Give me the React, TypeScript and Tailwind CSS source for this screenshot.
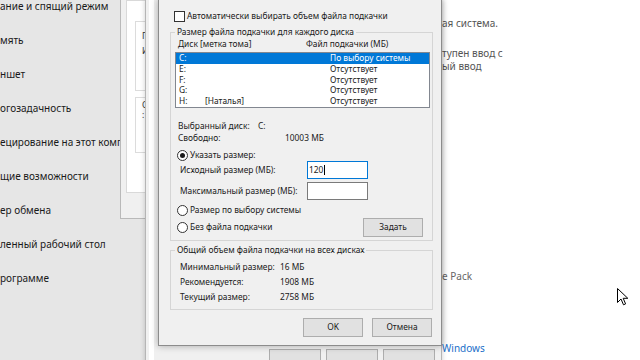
import React from "react"

const sidebarItems = [
  "ание и спящий режим",
  "мять",
  "ншет",
  "огозадачность",
  "ецирование на этот компьютер",
  "щие возможности",
  "ер обмена",
  "ленный рабочий стол",
  "рограмме",
]

const drives = [
  { letter: "C:", label: "", size: "По выбору системы", selected: true },
  { letter: "E:", label: "", size: "Отсутствует" },
  { letter: "F:", label: "", size: "Отсутствует" },
  { letter: "G:", label: "", size: "Отсутствует" },
  { letter: "H:", label: "[Наталья]", size: "Отсутствует" },
]

const totals = [
  { label: "Минимальный размер:", value: "16 МБ" },
  { label: "Рекомендуется:", value: "1908 МБ" },
  { label: "Текущий размер:", value: "2758 МБ" },
]

const Radio = ({ checked = false }: { checked?: boolean }) => (
  <span className="mr-[2px] flex h-[11px] w-[11px] shrink-0 items-center justify-center rounded-full border border-[#333] bg-white">
    {checked && <span className="h-[5px] w-[5px] rounded-full bg-[#1a1a1a]" />}
  </span>
)

const Button = ({ children, className = "" }: { children?: React.ReactNode; className?: string }) => (
  <div
    className={`flex h-[19px] w-[60px] items-center justify-center border border-[#adadad] bg-[#e1e1e1] ${className}`}
  >
    {children}
  </div>
)

const VirtualMemoryDialog = () => (
  <div className="absolute left-[158px] top-[-1px] h-[347px] w-[284px] border border-[#8c8c8c] bg-[#f0f0f0] pl-[11px] pr-[8px] pt-[10px] text-[8.4px] text-[#1a1a1a] shadow-[0_0_7px_rgba(0,0,0,0.3)]">
    <label className="flex h-[12px] items-center pl-[4px]">
      <span className="mr-[2px] h-[11px] w-[11px] border border-[#333] bg-white" />
      Автоматически выбирать объем файла подкачки
    </label>

    <fieldset className="mt-[4px] border border-[#d5d5d5] pb-[4px]">
      <legend className="ml-[4px] block px-[2px] leading-[12px]">
        Размер файла подкачки для каждого диска
      </legend>
      <div className="flex h-[12px] items-center pl-[7px]">
        <span className="w-[128px]">Диск [метка тома]</span>
        <span>Файл подкачки (МБ)</span>
      </div>
      <div className="ml-[4px] mt-[2px] h-[56px] w-[255px] border border-[#828790] bg-white">
        {drives.map((d) => (
          <div
            key={d.letter}
            className={`flex h-[10.7px] items-center pl-[3px] leading-[10px] ${
              d.selected ? "bg-[#0078d7] text-white" : ""
            }`}
          >
            <span className="w-[26px]">{d.letter}</span>
            <span className="w-[125px]">{d.label}</span>
            <span>{d.size}</span>
          </div>
        ))}
      </div>

      <div className="mt-[12px] flex h-[12px] items-center pl-[7px]">
        <span className="w-[80px]">Выбранный диск:</span>
        <span>C:</span>
      </div>
      <div className="flex h-[12px] items-center pl-[7px]">
        <span className="w-[107px]">Свободно:</span>
        <span>10003 МБ</span>
      </div>

      <div className="mt-[5px] flex h-[12px] items-center pl-[6px]">
        <Radio checked />
        Указать размер:
      </div>
      <div className="flex h-[18px] items-center pl-[9px]">
        <span className="w-[127px]">Исходный размер (МБ):</span>
        <div className="flex h-[18px] w-[61px] items-center border border-[#0078d7] bg-white pl-[1px]">
          120
          <span className="ml-px h-[10px] w-px bg-black" />
        </div>
      </div>
      <div className="mt-[3px] flex h-[18px] items-center pl-[9px]">
        <span className="w-[127px]">Максимальный размер (МБ):</span>
        <div className="h-[18px] w-[61px] border border-[#7a7a7a] bg-white" />
      </div>
      <div className="mt-[4px] flex h-[12px] items-center pl-[6px]">
        <Radio />
        Размер по выбору системы
      </div>
      <div className="mt-[2px] flex h-[18px] items-center pl-[6px]">
        <Radio />
        Без файла подкачки
        <Button className="ml-auto mr-[9px] h-[17px] border-[#6e8fb8]">Задать</Button>
      </div>
    </fieldset>

    <fieldset className="mt-[3px] border border-[#d5d5d5] pb-[4px]">
      <legend className="ml-[4px] block px-[2px] leading-[12px]">
        Общий объем файла подкачки на всех дисках
      </legend>
      <div className="pl-[9px] pt-[4px]">
        {totals.map((t) => (
          <div key={t.label} className="flex h-[15px] items-center">
            <span className="w-[100px]">{t.label}</span>
            <span>{t.value}</span>
          </div>
        ))}
      </div>
    </fieldset>

    <div className="mt-[8px] flex justify-end gap-[9px] pr-[1px]">
      <Button>OK</Button>
      <Button>Отмена</Button>
    </div>
  </div>
)

export default function App() {
  return (
    <div className="relative flex h-[360px] w-[640px] overflow-hidden bg-white font-['Noto_Sans',sans-serif]">
      {/* settings nav */}
      <div className="w-[145px] shrink-0 bg-[#e6e6e6] text-[10px] text-[#1a1a1a]">
        <div className="-mt-[11px]">
          {sidebarItems.map((item) => (
            <div key={item} className="flex h-[34px] items-center whitespace-nowrap">
              {item}
            </div>
          ))}
        </div>
      </div>

      {/* settings content, mostly covered */}
      <div className="flex flex-1 flex-col whitespace-nowrap pl-[297px] pt-[17px] text-[10px] leading-[13px] text-[#555]">
        <span>ая система.</span>
        <span className="mt-[17px]">тупен ввод с</span>
        <span>ый ввод</span>
        <span className="mt-[197px] text-[#666]">e Pack</span>
        <span className="mt-[59px] text-[#1a6fc9]">Windows</span>
      </div>

      {/* system properties window */}
      <div className="absolute left-[120px] top-[-1px] h-[220px] w-[60px] border border-[#b9b9b9] bg-[#f0f0f0] pl-[5px]">
        <div className="h-[193px] border border-[#d9d9d9] bg-white pl-[8px]">
          <div className="mt-[20px] h-[70px] border border-[#dcdcdc] pl-[6px] pt-[6px] text-[8.5px] leading-[15px] text-[#333]">
            <div>Параметры</div>
            <div>Использование</div>
          </div>
          <div className="mt-[6px] h-[56px] border border-[#dcdcdc] pl-[6px] pt-[2px] text-[8.5px] leading-[10px] text-[#333]">
            <div>Общий</div>
            <div>:</div>
          </div>
        </div>
      </div>

      {/* performance options window */}
      <div className="absolute left-[145px] top-[-1px] h-[380px] w-[297px] border border-[#b5b5b5] bg-[#f0f0f0] shadow-[0_0_5px_rgba(0,0,0,0.2)]">
        <div className="ml-[3px] h-full w-[5px] bg-white" />
      </div>
      <div className="absolute left-[269px] top-[349px] flex gap-[5px]">
        <div className="h-[30px] w-[52px] border border-[#adadad] bg-[#e1e1e1]" />
        <div className="h-[30px] w-[52px] border border-[#adadad] bg-[#e1e1e1]" />
        <div className="h-[30px] w-[52px] border border-[#adadad] bg-[#e1e1e1]" />
      </div>

      <VirtualMemoryDialog />

      {/* mouse pointer */}
      <svg className="absolute left-[617px] top-[288px]" width="12" height="18" viewBox="0 0 12 18">
        <path d="M0.5 0.5 L0.5 14.5 L4 11 L6.5 16.8 L8.6 15.9 L6.2 10.3 L10.8 10.3 Z" fill="white" stroke="black" strokeWidth="1" />
      </svg>
    </div>
  )
}
